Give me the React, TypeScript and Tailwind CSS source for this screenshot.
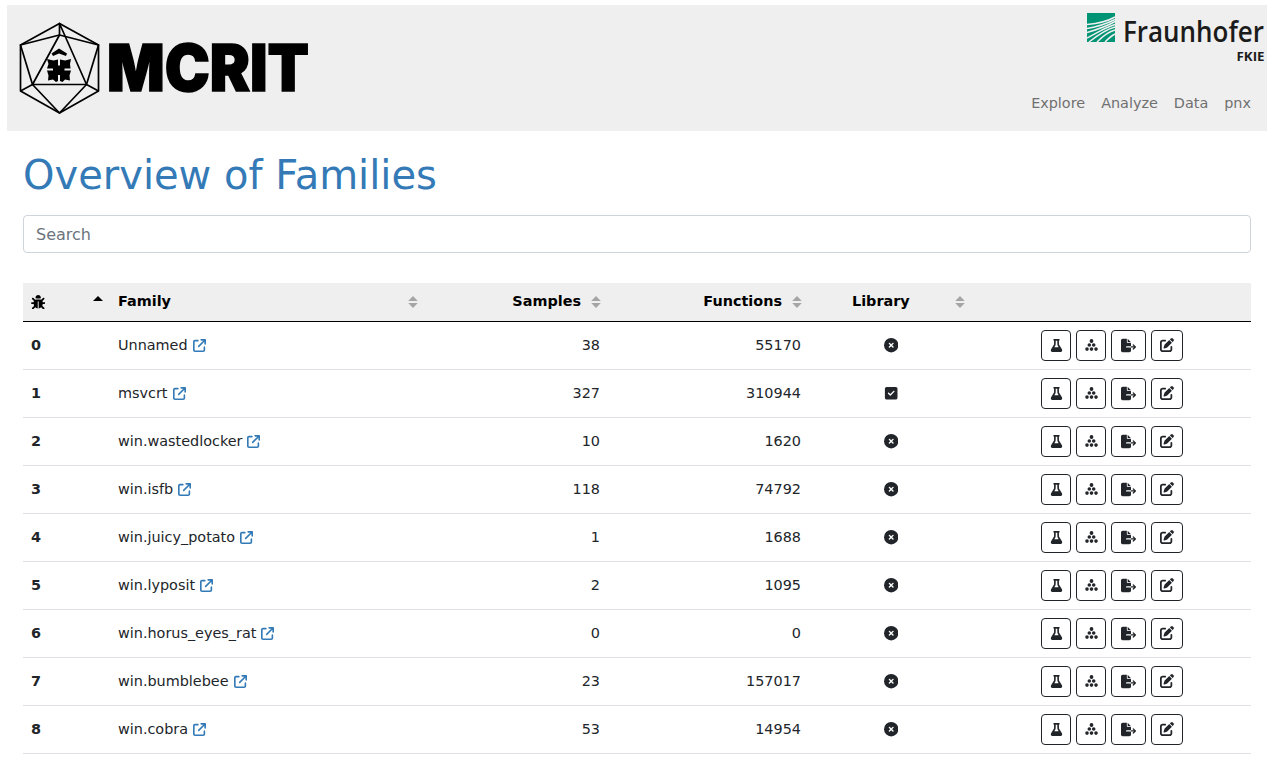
import React from 'react';
import {
  FaArrowUpRightFromSquare,
  FaBug,
  FaCircleXmark,
  FaFileExport,
  FaFlask,
  FaPenToSquare,
  FaSquareCheck,
} from 'react-icons/fa6';

type Family = { id: number; name: string; samples: number; functions: number; library?: boolean };

const families: Family[] = [
  { id: 0, name: 'Unnamed', samples: 38, functions: 55170 },
  { id: 1, name: 'msvcrt', samples: 327, functions: 310944, library: true },
  { id: 2, name: 'win.wastedlocker', samples: 10, functions: 1620 },
  { id: 3, name: 'win.isfb', samples: 118, functions: 74792 },
  { id: 4, name: 'win.juicy_potato', samples: 1, functions: 1688 },
  { id: 5, name: 'win.lyposit', samples: 2, functions: 1095 },
  { id: 6, name: 'win.horus_eyes_rat', samples: 0, functions: 0 },
  { id: 7, name: 'win.bumblebee', samples: 23, functions: 157017 },
  { id: 8, name: 'win.cobra', samples: 53, functions: 14954 },
];

const columns = 'grid grid-cols-[87px_315px_183px_201px_164px_278px]';

function McritLogo() {
  return (
    <svg width="300" height="100" viewBox="0 0 300 100" role="img" aria-label="MCRIT">
      <g fill="none" stroke="#000" strokeWidth="1.7" strokeLinejoin="round">
        <path d="M46.5 5.5 85.5 27V73L46.5 95 7.5 73V27Z" />
        <path d="M46.5 5.5V17L19.5 66.500H73.500Z" />
        <path d="M46.500 17 7.500 27 19.500 66.500 7.500 73M46.500 17 85.500 27 73.500 66.500 85.500 73M19.500 66.500 46.500 95 73.500 66.500" />
      </g>
      <path d="M38.500 35.500 46 30.500 54 35.500 53 38 46 35.500 40 38Z" />
      <path d="M34 41l6.500 1.500 4.500-1v6h2v-6l5 1 6-1.500-1 5 .5 4.500h-6v2h6.500l-1.500 5 .5 5-5-1-2.500 2.500-2.500-1V57h-2v6l-2 1-3-2.500-5 1 .5-5-1.500-5H40v-2h-6l1.500-4.500Z" />
      <text x="94" y="73" textLength="202" lengthAdjust="spacingAndGlyphs" fontSize="64" fontWeight="900" fontFamily="Inter" stroke="#000" strokeWidth="1.500">
        MCRIT
      </text>
    </svg>
  );
}

function FraunhoferLogo() {
  return (
    <svg width="180" height="54" viewBox="0 0 180 54" role="img" aria-label="Fraunhofer FKIE">
      <path fill="#009374" d="M0 0h28v29H0z" />
      <g fill="none" stroke="#efefef" strokeWidth="1.500">
        <path d="M0 11.500C12 10.500 21 8 28 4" />
        <path d="M0 15.500C12 13.500 21 10 28 6.500" />
        <path d="M0 19.500C12 16 21 12.500 28 8.500" />
        <path d="M0 25C11 19.500 19 14 28 11.500" />
        <path d="M2 29C11 22 20 16 28 14" />
        <path d="M10 29C16 23 22 18.500 28 17" />
        <path d="M18 29C22 25 25 22.500 28 21" />
      </g>
      <text x="36" y="28.500" textLength="141" lengthAdjust="spacingAndGlyphs" fontSize="28" fontWeight="600" fontFamily="Open Sans" fill="#1b1b1b">
        Fraunhofer
      </text>
      <text x="149.500" y="48" textLength="28" lengthAdjust="spacingAndGlyphs" fontSize="12.500" fontWeight="700" fontFamily="Open Sans" fill="#1b1b1b">
        FKIE
      </text>
    </svg>
  );
}

function SortIcon() {
  return (
    <svg width="10" height="12" viewBox="0 0 10 12" fill="#a5a5a5">
      <path d="M5 0 9.800 5H.2ZM.2 7h9.600L5 12Z" />
    </svg>
  );
}

function PyramidIcon() {
  return (
    <svg width="13" height="12" viewBox="0 0 13 12" fill="currentColor">
      <circle cx="6.500" cy="2" r="1.900" />
      <circle cx="4.300" cy="6" r="1.800" />
      <circle cx="8.700" cy="6" r="1.800" />
      <circle cx="2" cy="10.100" r="1.800" />
      <circle cx="6.500" cy="10.100" r="1.800" />
      <circle cx="11" cy="10.100" r="1.800" />
    </svg>
  );
}

function TableHead() {
  return (
    <div className={`${columns} h-[39px] items-center border-b border-black bg-[#efefef] font-bold text-black`}>
      <div className="flex items-center justify-between pr-[7px] pl-2">
        <FaBug size={14.4} />
        <svg className="mb-[7px]" width="10" height="5" viewBox="0 0 10 5"><path d="M5 0 10 5H0Z" /></svg>
      </div>
      <div className="flex items-center justify-between pr-[7px] pl-2">Family <SortIcon /></div>
      <div className="flex items-center justify-end gap-[10px] pr-[7px]">Samples <SortIcon /></div>
      <div className="flex items-center justify-end gap-[10px] pr-[7px]">Functions <SortIcon /></div>
      <div className="flex items-center justify-between pr-2 pl-[43px]">Library <SortIcon /></div>
      <div />
    </div>
  );
}

function ActionButton({ label, className, children }: { label: string; className: string; children: React.ReactNode }) {
  return (
    <button aria-label={label} className={`flex h-[31px] items-center justify-center rounded-[4px] border border-[#212529] pb-px ${className}`}>
      {children}
    </button>
  );
}

function FamilyRow({ family }: { family: Family }) {
  return (
    <div className={`${columns} h-12 items-center border-b border-[#dee2e6]`}>
      <div className="pl-2 font-bold">{family.id}</div>
      <div className="flex items-center gap-[5px] pl-2">
        {family.name}
        <FaArrowUpRightFromSquare className="text-[#337ab7]" size={13} />
      </div>
      <div className="pr-2 text-right">{family.samples}</div>
      <div className="pr-2 text-right">{family.functions}</div>
      <div className="flex justify-center">
        {family.library ? <FaSquareCheck size={14.4} /> : <FaCircleXmark size={14.4} />}
      </div>
      <div className="flex justify-center gap-[5px]">
        <ActionButton label="Analyze" className="w-[30px]"><FaFlask size={13} /></ActionButton>
        <ActionButton label="Samples" className="w-[30px]"><PyramidIcon /></ActionButton>
        <ActionButton label="Export" className="w-[35px]"><FaFileExport size={15} /></ActionButton>
        <ActionButton label="Edit" className="w-[32px]"><FaPenToSquare size={14} /></ActionButton>
      </div>
    </div>
  );
}

export default function App() {
  return (
    <div className="h-[760px] overflow-hidden bg-white font-['DejaVu_Sans',sans-serif] text-[14.4px] text-[#212529]">
      <header className="mx-2 mt-0 flex h-[131px] justify-between border-t-[5px] border-white bg-[#efefef] -ml-0 ml-[7px]">
        <div className="pt-[13px] pl-[6px]"><McritLogo /></div>
        <div className="flex flex-col items-end pt-2">
          <FraunhoferLogo />
          <nav className="mt-[26px] flex gap-4 pr-4 text-[#707070]">
            <a>Explore</a>
            <a>Analyze</a>
            <a>Data</a>
            <a>pnx</a>
          </nav>
        </div>
      </header>
      <main className="mr-6 ml-[23px]">
        <h1 className="pt-5 text-[40px] leading-[48px] text-[#337ab7]">Overview of Families</h1>
        <input
          placeholder="Search"
          className="mt-4 block h-[38px] w-full rounded-[4px] border border-[#ced4da] px-3 text-base placeholder:text-[#6c757d]"
        />
        <div className="mt-[30px]">
          <TableHead />
          {families.map((family) => (
            <FamilyRow key={family.id} family={family} />
          ))}
        </div>
      </main>
    </div>
  );
}
